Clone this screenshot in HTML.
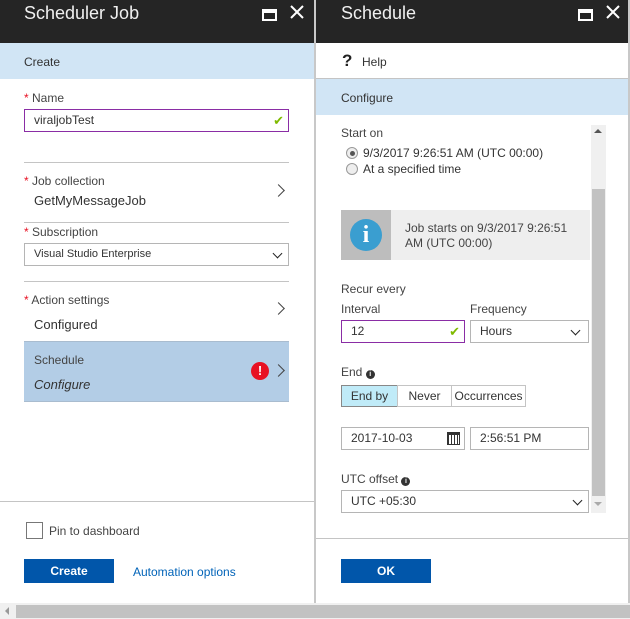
<!DOCTYPE html>
<html><head><style>
*{box-sizing:border-box;margin:0;padding:0}
body{width:630px;height:619px;background:#fff;font-family:"Liberation Sans",sans-serif;font-size:12px;color:#333;position:relative;overflow:hidden}
.a{position:absolute}
.hdr{background:#252525;color:#fff;height:43px;top:0}
.hdr .t{position:absolute;left:24px;top:3px;font-size:18px;color:#f0f0f0}
.band{background:#d1e5f5;height:36px}
.line{background:#c4c4c4;height:1px}
.lbl{font-size:12px;color:#444}
.star{color:#e81123}
.inp{border:1px solid #b5b5b5;height:23px;background:#fff;padding:0 9px;font-size:12px;line-height:21px}
.chev{width:7px;height:7px;border-right:1.8px solid #222;border-bottom:1.8px solid #222;transform:rotate(45deg)}
.rchev{width:9px;height:9px;border-right:1.3px solid #444;border-top:1.3px solid #444;transform:rotate(45deg)}
.btn{background:#0156aa;color:#fff;font-weight:bold;text-align:center;font-size:12px;line-height:24px;height:24px}
.max{position:absolute;left:262px;top:9px;width:15px;height:12px;border:2px solid #fff;border-top-width:4px}
.x{position:absolute;left:289px;top:4px;width:16px;height:16px}
</style></head><body>
<div class="a hdr" style="left:0;width:314px"><div class="t">Scheduler Job</div>
<div class="max"></div>
<svg class="x" viewBox="0 0 16 16"><path d="M2 2L14 14M14 2L2 14" stroke="#fff" stroke-width="2"/></svg></div>
<div class="a band" style="left:0;top:43px;width:314px"><div class="a" style="left:24px;top:12px;color:#333">Create</div></div>
<div class="a lbl" style="left:24px;top:91px"><span class="star">*</span> Name</div>
<div class="a inp" style="left:24px;top:109px;width:265px;border-color:#8a2da5">viraljobTest<span class="a" style="right:4px;top:0;color:#7fba00;font-size:13px">✔</span></div>
<div class="a line" style="left:24px;top:162px;width:265px"></div>
<div class="a lbl" style="left:24px;top:174px"><span class="star">*</span> Job collection</div>
<div class="a" style="left:34px;top:193px;font-size:13px;color:#333">GetMyMessageJob</div>
<div class="a rchev" style="left:274px;top:186px"></div>
<div class="a line" style="left:24px;top:222px;width:265px"></div>
<div class="a lbl" style="left:24px;top:225px"><span class="star">*</span> Subscription</div>
<div class="a inp" style="left:24px;top:243px;width:265px;font-size:11px">Visual Studio Enterprise<div class="a chev" style="right:7px;top:6px"></div></div>
<div class="a line" style="left:24px;top:281px;width:265px"></div>
<div class="a lbl" style="left:24px;top:293px"><span class="star">*</span> Action settings</div>
<div class="a" style="left:34px;top:317px;font-size:13px">Configured</div>
<div class="a rchev" style="left:274px;top:304px"></div>
<div class="a" style="left:24px;top:341px;width:265px;height:61px;background:#b3cde6;border-top:1px solid #a9bccf;border-bottom:1px solid #a9bccf">
<div class="a" style="left:10px;top:11px;color:#444">Schedule</div>
<div class="a" style="left:10px;top:35px;font-style:italic;font-size:13px;color:#333">Configure</div>
<div class="a" style="left:227px;top:20px;width:18px;height:18px;border-radius:50%;background:#e81123;color:#fff;font-weight:bold;text-align:center;line-height:18px;font-size:13px">!</div>
<div class="a rchev" style="left:250px;top:24px"></div></div>
<div class="a line" style="left:0;top:501px;width:314px"></div>
<div class="a" style="left:26px;top:522px;width:17px;height:17px;border:1px solid #777"></div>
<div class="a" style="left:49px;top:524px;color:#444">Pin to dashboard</div>
<div class="a btn" style="left:24px;top:559px;width:90px">Create</div>
<div class="a" style="left:133px;top:565px;color:#0163b8">Automation options</div>
<div class="a" style="left:314px;top:0;width:2px;height:603px;background:#c8c8c8"></div>
<div class="a hdr" style="left:316px;width:314px"><div class="t" style="left:25px">Schedule</div>
<div class="max"></div>
<svg class="x" viewBox="0 0 16 16"><path d="M2 2L14 14M14 2L2 14" stroke="#fff" stroke-width="2"/></svg></div>
<div class="a" style="left:342px;top:51px;font-size:17px;font-weight:bold;color:#222">?</div>
<div class="a" style="left:362px;top:55px;color:#333">Help</div>
<div class="a line" style="left:316px;top:78px;width:312px"></div>
<div class="a band" style="left:316px;top:79px;width:312px"><div class="a" style="left:25px;top:12px">Configure</div></div>
<div class="a" style="left:341px;top:126px;color:#444">Start on</div>
<div class="a" style="left:346px;top:147px;width:12px;height:12px;border-radius:50%;border:1px solid #999;background:#eee"><div class="a" style="left:2.5px;top:2.5px;width:5px;height:5px;border-radius:50%;background:#555"></div></div>
<div class="a" style="left:363px;top:146px;color:#333">9/3/2017 9:26:51 AM (UTC 00:00)</div>
<div class="a" style="left:346px;top:163px;width:12px;height:12px;border-radius:50%;border:1px solid #999;background:#eee"></div>
<div class="a" style="left:363px;top:162px;color:#333">At a specified time</div>
<div class="a" style="left:591px;top:125px;width:15px;height:388px;background:#f0f0f0"></div>
<div class="a" style="left:592px;top:189px;width:13px;height:307px;background:#c2c2c2"></div>
<div class="a" style="left:594px;top:129px;border:4px solid transparent;border-bottom:4px solid #555;border-top:none"></div>
<div class="a" style="left:594px;top:502px;border:4px solid transparent;border-top:4px solid #aaa;border-bottom:none"></div>
<div class="a" style="left:341px;top:210px;width:249px;height:50px;background:#eee"></div>
<div class="a" style="left:341px;top:210px;width:50px;height:50px;background:#bdbdbd"></div>
<div class="a" style="left:350px;top:219px;width:32px;height:32px;border-radius:50%;background:#3a9ed0;color:#fff;font-family:'Liberation Serif',serif;font-weight:bold;font-size:24px;text-align:center;line-height:32px">i</div>
<div class="a" style="left:405px;top:221px;color:#444;line-height:15px;width:180px">Job starts on 9/3/2017 9:26:51 AM (UTC 00:00)</div>
<div class="a" style="left:341px;top:282px;color:#444">Recur every</div>
<div class="a" style="left:341px;top:302px;color:#444">Interval</div>
<div class="a" style="left:470px;top:302px;color:#444">Frequency</div>
<div class="a inp" style="left:341px;top:320px;width:124px;border-color:#8a2da5">12<span class="a" style="right:4px;top:0;color:#7fba00;font-size:13px">✔</span></div>
<div class="a inp" style="left:470px;top:320px;width:119px">Hours<div class="a chev" style="right:9px;top:6px"></div></div>
<div class="a" style="left:341px;top:365px;color:#444">End <span style="display:inline-block;width:9px;height:9px;border-radius:50%;background:#333;color:#fff;font-size:7px;text-align:center;line-height:9px;font-weight:bold">i</span></div>
<div class="a" style="left:341px;top:385px;width:57px;height:22px;background:#c0ebf8;border:1px solid #888;text-align:center;line-height:20px">End by</div>
<div class="a" style="left:397px;top:385px;width:55px;height:22px;border:1px solid #c4c4c4;text-align:center;line-height:20px">Never</div>
<div class="a" style="left:451px;top:385px;width:75px;height:22px;border:1px solid #c4c4c4;text-align:center;line-height:20px">Occurrences</div>
<div class="a inp" style="left:341px;top:427px;width:124px">2017-10-03<span class="a" style="right:4px;top:4px;width:13px;height:13px;border:1px solid #333;border-top:3px solid #333;background:repeating-linear-gradient(90deg,#333 0 1px,#fff 1px 3px)"></span></div>
<div class="a inp" style="left:470px;top:427px;width:119px">2:56:51 PM</div>
<div class="a" style="left:341px;top:472px;color:#444">UTC offset <span style="display:inline-block;width:9px;height:9px;border-radius:50%;background:#333;color:#fff;font-size:7px;text-align:center;line-height:9px;font-weight:bold">i</span></div>
<div class="a inp" style="left:341px;top:490px;width:248px">UTC +05:30<div class="a chev" style="right:7px;top:6px"></div></div>
<div class="a line" style="left:316px;top:538px;width:312px"></div>
<div class="a btn" style="left:341px;top:559px;width:90px">OK</div>
<div class="a" style="left:628px;top:0;width:2px;height:603px;background:#c8c8c8"></div>
<div class="a" style="left:0;top:603px;width:630px;height:16px;background:#f0f0f0"></div>
<div class="a" style="left:16px;top:605px;width:614px;height:13px;background:#c2c2c2"></div>
<div class="a" style="left:5px;top:607px;border:4px solid transparent;border-right:4px solid #999;border-left:none"></div>
</body></html>
